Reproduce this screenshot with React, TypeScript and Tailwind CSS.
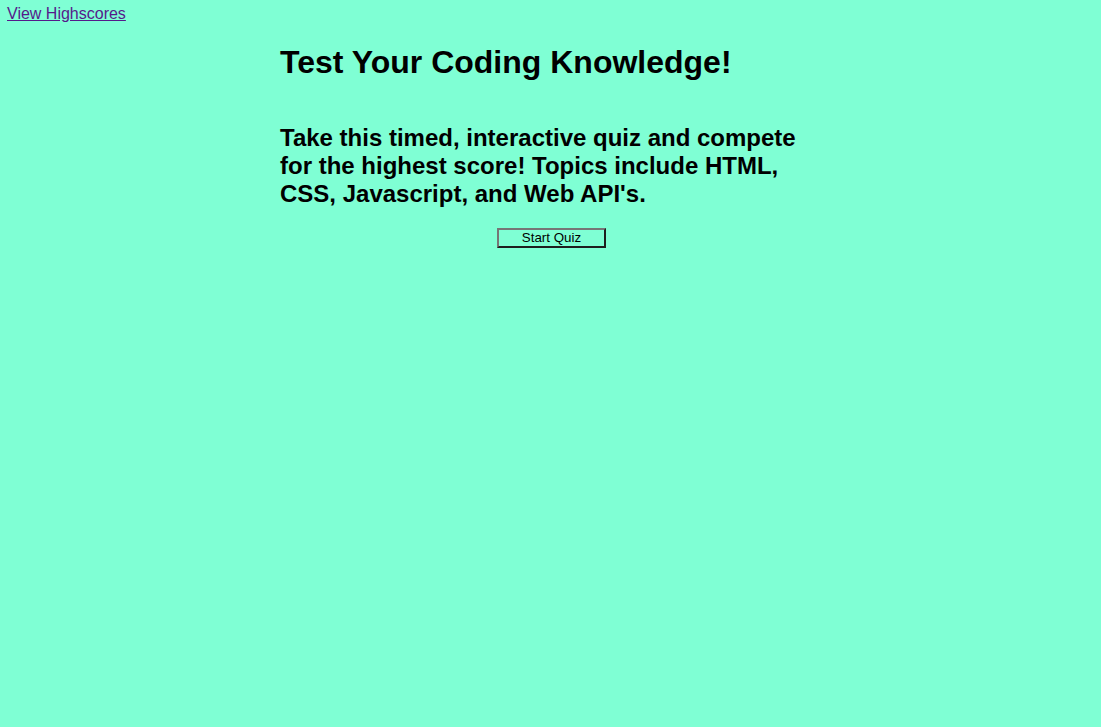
export default function App() {
  return (
    <div className="min-h-screen bg-[#7fffd4] text-black font-['Liberation_Sans',Arial,sans-serif]">
      {/* top link */}
      <div className="pl-[7px] pt-[5px] text-[16px] leading-[18px]">
        <a href="#" className="text-[#551a8b] underline">
          View Highscores
        </a>
      </div>

      <main className="mx-auto w-[541px]">
        <h1 className="mt-[21px] text-[32px] font-bold leading-[37px]">
          Test Your Coding Knowledge!
        </h1>
        <h2 className="mt-[43px] text-[24px] font-bold leading-[28px]">
          Take this timed, interactive quiz and compete for the highest score!
          Topics include HTML, CSS, Javascript, and Web API's.
        </h2>
        <div className="mt-[20px] flex justify-center pl-[2px]">
          <button className="h-[20px] w-[109px] border-2 border-t-[#767676] border-l-[#767676] border-r-[#1e1e1e] border-b-[#1e1e1e] bg-transparent text-[13.33px] leading-[14px] text-black">
            Start Quiz
          </button>
        </div>
      </main>
    </div>
  );
}
